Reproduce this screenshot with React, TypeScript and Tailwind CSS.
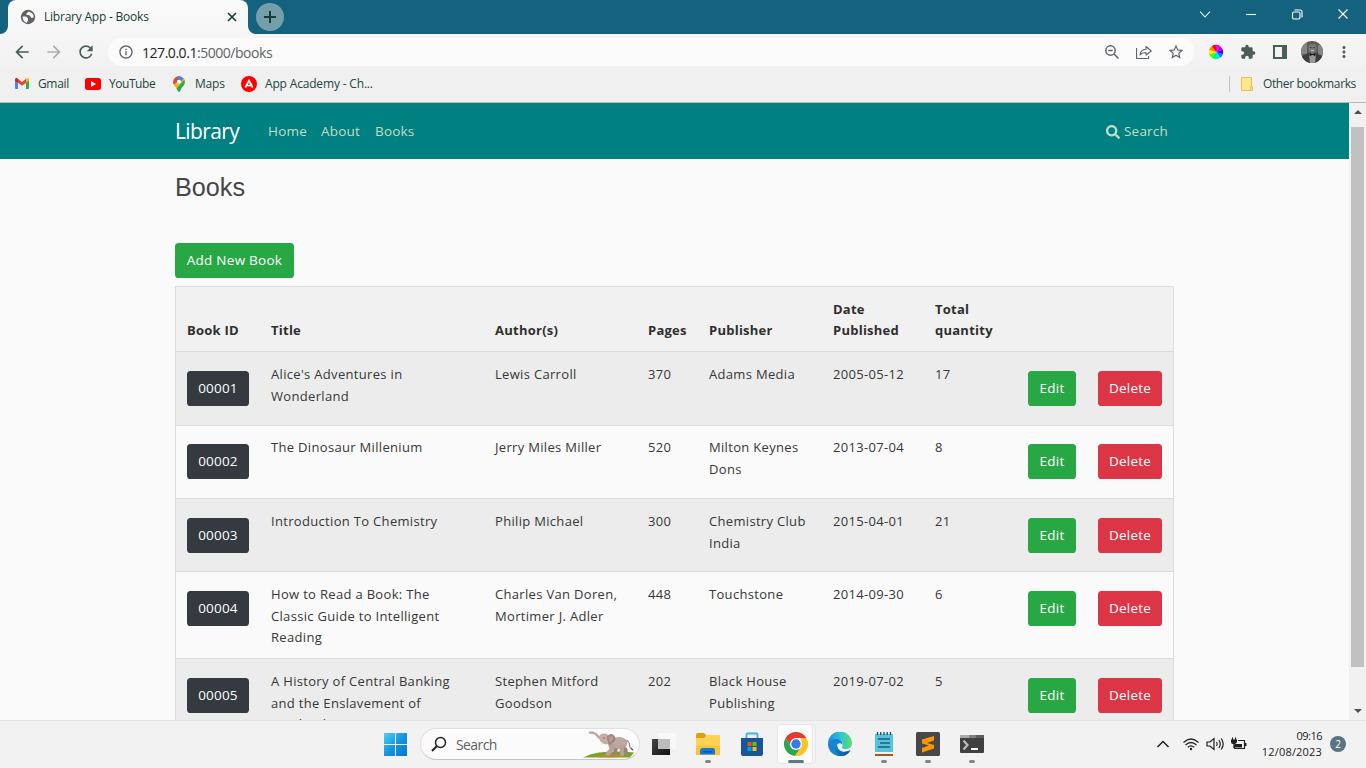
import React from "react";
import { FaSearch } from "react-icons/fa";
import { MdExtension, MdPublic, MdRefresh, MdArrowBack, MdArrowForward, MdStarBorder, MdInfoOutline, MdMoreVert } from "react-icons/md";

const books = [
  { id: "00001", title: ["Alice's Adventures in", "Wonderland"], author: ["Lewis Carroll"], pages: "370", publisher: ["Adams Media"], date: "2005-05-12", qty: "17", row: "h-[74px] bg-[#ececec] pt-[11px]" },
  { id: "00002", title: ["The Dinosaur Millenium"], author: ["Jerry Miles Miller"], pages: "520", publisher: ["Milton Keynes", "Dons"], date: "2013-07-04", qty: "8", row: "h-[73px] bg-[#fafafa] pt-[10px]" },
  { id: "00003", title: ["Introduction To Chemistry"], author: ["Philip Michael"], pages: "300", publisher: ["Chemistry Club", "India"], date: "2015-04-01", qty: "21", row: "h-[73px] bg-[#ececec] pt-[11px]" },
  { id: "00004", title: ["How to Read a Book: The", "Classic Guide to Intelligent", "Reading"], author: ["Charles Van Doren,", "Mortimer J. Adler"], pages: "448", publisher: ["Touchstone"], date: "2014-09-30", qty: "6", row: "h-[87px] bg-[#fafafa] pt-[11px]" },
  { id: "00005", title: ["A History of Central Banking", "and the Enslavement of", "Mankind"], author: ["Stephen Mitford", "Goodson"], pages: "202", publisher: ["Black House", "Publishing"], date: "2019-07-02", qty: "5", row: "h-[87px] bg-[#ececec] pt-[11px]" },
];

const columns = "grid grid-cols-[84px_224px_153px_61px_124px_102px_93px_70px_86px]";

function Lines({ lines }: { lines: string[] }) {
  return (
    <div className="pl-[11px] pt-px">
      {lines.map((l) => (
        <div key={l} className="whitespace-nowrap">{l}</div>
      ))}
    </div>
  );
}

function Btn({ children, tone }: { children: React.ReactNode; tone: string }) {
  return (
    <div className="pl-[11px] pt-2">
      <button className={"flex h-[35px] items-center justify-center rounded-[3.6px] pt-px text-[13.500px] tracking-[0.2px] text-white " + tone}>{children}</button>
    </div>
  );
}

function TabStrip() {
  return (
    <div className="flex h-[34px] bg-[#14627e]">
      <div className="flex w-2 items-end bg-[#f6f6f6]">
        <div className="h-full w-full rounded-br-lg bg-[#14627e]" />
      </div>
      <div className="flex w-60 items-center rounded-t-lg bg-gradient-to-b from-[#fafafa] to-[#f6f6f6] pl-3 pr-2.5">
        <svg viewBox="0 0 16 16" className="size-4"><circle cx="8" cy="8" r="7.200" fill="#5f6368" /><path d="M2.500 7.500h3.500l2 2v2l-1.500 2.500Q3 12.500 2.500 7.500zM8.500 2.500l-2 2v1.500h2.500l1.500 1.500 1 1.500 2.200-.5Q14 4 8.500 2.500z" fill="#f8f8f8" /></svg>
        <span className="ml-2 flex-1 text-[12px] tracking-[-0.22px] text-[#173d36]">Library App - Books</span>
        <svg viewBox="0 0 12 12" className="size-3" stroke="#173d36" strokeWidth="1.7"><path d="M2 2l8 8M10 2l-8 8" /></svg>
      </div>
      <div className="w-2 bg-[#f6f6f6]"><div className="h-full rounded-bl-lg bg-[#14627e]" /></div>
      <div className="mt-[3px] flex size-7 items-center justify-center rounded-full bg-[#759eab]">
        <svg viewBox="0 0 14 14" className="size-3.5" stroke="#173d36" strokeWidth="2"><path d="M7 1v12M1 7h12" /></svg>
      </div>
      <div className="flex-1" />
      <svg viewBox="0 0 160 28" className="h-7 w-40" fill="none" stroke="#fff" strokeWidth="1.1">
        <path d="M0 11.500l5 5.500 5-5.500" />
        <path d="M46 14.500h10" />
        <rect x="92.500" y="12" width="7.500" height="7" rx="1.500" />
        <path d="M94.500 10h5.500q2 0 2 2v5.500" />
        <path d="M138.500 9.500l9 9M147.500 9.500l-9 9" />
      </svg>
      <div className="w-[6px]" />
    </div>
  );
}

const wheel = ["#ff0000", "#ff00c8", "#b000ff", "#3300ff", "#0080ff", "#00e5ff", "#00ff55", "#55ff00", "#ffee00", "#ff8000"];

function Toolbar() {
  return (
    <div className="flex h-9 items-center bg-gradient-to-b from-[#f6f6f6] to-[#f1f1f1] pl-3 text-[#4a5e59]">
      <MdArrowBack className="size-5" />
      <MdArrowForward className="ml-3 size-5 text-[#a9b0ae]" />
      <MdRefresh className="ml-3 size-5" />
      <div className="ml-3 flex h-7 w-[1086px] items-center rounded-full bg-[#fbfbfb] pl-2.5 text-[#5f6368]">
        <MdInfoOutline className="size-4" />
        <span className="ml-2 text-[14px] tracking-[-0.46px]"><span className="text-[#202124]">127.0.0.1</span>:5000/books</span>
        <div className="flex-1" />
        <svg viewBox="0 0 16 16" className="size-4" fill="none" stroke="currentColor" strokeWidth="1.500"><circle cx="6.500" cy="6.500" r="4.700" /><path d="M10 10l4.500 4.500M4.300 6.500h4.400" /></svg>
        <svg viewBox="0 0 16 16" className="ml-4 size-4" fill="none" stroke="currentColor" strokeWidth="1.100"><path d="M.6 4v10.500h12v-2.500M4 11c.4-4 2.500-5.700 6-5.800V2.500L15.300 7 10 11V8.500c-3 0-4.500.5-6 2.500z" strokeLinejoin="round" /></svg>
        <MdStarBorder className="ml-[15px] size-[18px]" />
        <div className="w-[9px]" />
      </div>
      <svg viewBox="-8 -8 16 16" className="ml-3.5 size-4">
        {wheel.map((c, i) => (
          <path key={c} fill={c} transform={`rotate(${i * 36 - 18})`} d="M0 0L-2.300 -6.800A7.200 7.200 0 0 1 2.300 -6.800Z" />
        ))}
      </svg>
      <MdExtension className="ml-4 size-4" />
      <svg viewBox="0 0 14 14" className="ml-[17px] size-3.5"><path fill="currentColor" fillRule="evenodd" d="M0 0h14v14H0zM2 2h7v10H2z" /></svg>
      <svg viewBox="0 0 22 22" className="ml-[14px] size-[22px]">
        <defs><clipPath id="avatar"><circle cx="11" cy="11" r="11" /></clipPath></defs>
        <g clipPath="url(#avatar)">
          <path fill="#5c5c5c" d="M0 0h22v22H0z" />
          <path fill="#858585" d="M0 2h6v11H0zM17 4h5v10h-5z" />
          <path fill="#3d3d3d" d="M0 22v-6l7-4 4 2 5-2 6 4v6z" />
          <path fill="#999" d="M8 13l3 1 4-1-1 9H9z" />
          <ellipse cx="11.500" cy="7" rx="4" ry="5.500" fill="#777" />
          <path d="M7 5q4-7 9 0l-2-2.500H9z" fill="#303030" />
          <path d="M9 6.500h1.500M12.500 6.500h1.500" stroke="#3a3a3a" />
          <path d="M10 9.500h3" stroke="#c4c4c4" />
          <path d="M8.500 12l3 1.500 3-1.500v3l-3-1-3 1z" fill="#151515" />
        </g>
      </svg>
      <MdMoreVert className="ml-3 size-[18px]" />
    </div>
  );
}

function Bookmarks() {
  return (
    <div className="flex h-[33px] items-center border-b border-[#bababa] bg-[#f0f0f0] pb-[5px] pl-[15px] text-[12px] text-[#23463f]">
      <svg viewBox="0 0 14 11" className="h-[11px] w-3.5">
        <path fill="#4285f4" d="M0 1.500l3 2.300V11H1q-1 0-1-1z" />
        <path fill="#34a853" d="M14 1.500l-3 2.300V11h2q1 0 1-1z" />
        <path fill="#ea4335" d="M3 .7l4 3.200L11 .7v4L7 7.700 3 4.700z" />
        <path fill="#c5221f" d="M0 1.500Q.5-.8 3 .7v4L0 2.600z" />
        <path fill="#fbbc04" d="M14 1.500Q13.500-.8 11 .7v4l3-2.100z" />
      </svg>
      <span className="ml-[9px] w-[47px] tracking-[-0.35px]">Gmail</span>
      <svg viewBox="0 0 16 12" className="h-3 w-4"><rect width="16" height="12" rx="2.500" fill="#f00" /><path d="M6 3l5 3-5 3z" fill="#fff" /></svg>
      <span className="ml-2 w-[64px] tracking-[-0.45px]">YouTube</span>
      <svg viewBox="0 0 12 16" className="h-4 w-3">
        <defs><clipPath id="pin"><path d="M6 .3a5.700 5.700 0 0 1 5.700 5.700c0 3.500-3.200 4.800-4.400 8.500q-1.300 2.600-2.600 0C3.500 10.800.3 9.500.3 6A5.700 5.700 0 0 1 6 .3z" /></clipPath></defs>
        <g clipPath="url(#pin)">
          <path fill="#34a853" d="M0 0h12v16H0z" />
          <path fill="#fbbc04" d="M0 10L12-3v7L3 14z" />
          <path fill="#34a853" d="M12 3L2 14v2h10z" />
          <path fill="#4285f4" d="M4 0h9L4 10 1 6z" />
          <path fill="#ea4335" d="M0 0h4l2.500 3L2 9H0z" transform="translate(-1 0)" />
          <path fill="#fbbc04" d="M1 9l3-3 2 2-4 5z" />
        </g>
        <circle cx="6" cy="5.800" r="2" fill="#fff" />
      </svg>
      <span className="ml-2.5 w-[46px] tracking-[-0.2px]">Maps</span>
      <svg viewBox="0 0 16 16" className="size-4"><circle cx="8" cy="8" r="8" fill="#f00" /><path d="M4.300 11.500L8 4.500l3.700 7M5.500 9.500h5" fill="none" stroke="#fff" strokeWidth="1.700" /></svg>
      <span className="ml-2 flex-1 tracking-[-0.17px]">App Academy - Ch...</span>
      <div className="h-4 w-px bg-[#c3c3c3]" />
      <svg viewBox="0 0 12 14" className="ml-[11px] h-3.5 w-3"><path d="M.5.5h10v9h1v4H.5z" fill="#ffe693" stroke="#e8c34c" /><path d="M9.500 13v-3h2" fill="none" stroke="#e8c34c" /></svg>
      <span className="ml-2.5 mr-[10px] w-[93px] whitespace-nowrap tracking-[-0.37px]">Other bookmarks</span>
    </div>
  );
}

function Page() {
  return (
    <div className="h-[617px] flex-1 overflow-hidden bg-[#fafafa] text-[13px] leading-[21.6px] tracking-[0.32px] text-[#373737]">
      <nav className="flex h-14 items-center bg-[#008080] pl-[175px] pr-[182px] pt-px text-[13.500px] tracking-[0.2px] text-[#c3dcc8]">
        <span className="w-[93px] pt-px text-[21px] tracking-[-0.6px] text-white">Library</span>
        <span className="w-[53px]">Home</span>
        <span className="w-[54px]">About</span>
        <span className="flex-1">Books</span>
        <FaSearch className="mr-1 size-[14px]" />
        <span className="w-[43px]">Search</span>
      </nav>
      <div className="pl-[175px]">
        <h3 className="h-[84px] pt-[13px] font-['Liberation_Sans',sans-serif] text-[25.2px] leading-[30px] tracking-normal text-[#454545]">Books</h3>
        <button className="flex h-[35px] w-[119px] items-center justify-center rounded-[3.6px] bg-[#28a745] pt-px text-[13.500px] tracking-[0.26px] text-white">Add New Book</button>
        <div className="mt-2 w-[999px] border border-[#dcdee1]">
          <div className={columns + " h-16 items-end bg-[#f1f1f1] pb-[9px] font-bold tracking-[0.25px] text-[#2f2f2f] [&>div]:pl-[11px]"}>
            <div>Book ID</div><div>Title</div><div>Author(s)</div><div>Pages</div><div>Publisher</div>
            <div>Date<br />Published</div><div>Total<br />quantity</div>
          </div>
          {books.map((b) => (
            <div key={b.id} className={columns + " border-t border-[#dadbdd] " + b.row}>
              <Btn tone="w-[62px] bg-[#343a40]">{b.id}</Btn>
              <Lines lines={b.title} />
              <Lines lines={b.author} />
              <Lines lines={[b.pages]} />
              <Lines lines={b.publisher} />
              <Lines lines={[b.date]} />
              <Lines lines={[b.qty]} />
              <Btn tone="w-12 bg-[#28a745]">Edit</Btn>
              <Btn tone="w-16 bg-[#dc3545]">Delete</Btn>
            </div>
          ))}
        </div>
      </div>
    </div>
  );
}

function ScrollBar() {
  return (
    <div className="flex w-[17px] flex-col items-center bg-[#f1f1f1]">
      <svg viewBox="0 0 8 4" className="mt-[7px] h-1 w-2"><path d="M0 4l4-4 4 4z" fill="#505050" /></svg>
      <div className="mt-[13px] h-[540px] w-[13px] bg-[#c1c1c1]" />
      <svg viewBox="0 0 8 4" className="mt-[42px] h-1 w-2"><path d="M0 0l4 4 4-4z" fill="#505050" /></svg>
    </div>
  );
}

function Elephant() {
  return (
    <svg viewBox="0 0 52 28" className="h-7 w-[52px]">
      <path d="M0 27.500Q8 23.500 16 22.500q18-2 35 0L47 27.500z" fill="#7ba02a" />
      <path d="M10 26.500q16-3 32-1.500l-4 2q-14 1-28-.5z" fill="#b98a32" />
      <path d="M41 15l3.500 4 .5 6h-3.500l-1-5-4-4z" fill="#9a827c" />
      <path d="M30 16l1 4-2 5.500h3.500L35 19v-3z" fill="#9a827c" />
      <ellipse cx="36" cy="13" rx="8.500" ry="6" fill="#bda7a1" />
      <path d="M25 14l1.500 5-4 4 .5 2.500h3.500l5-6V14zM37 15l-.5 5 1 5.500h3.500V19l2.500-4z" fill="#b8a19b" />
      <path d="M43.500 10q3 2 3 5t3 4.500" fill="none" stroke="#a28b85" strokeWidth="1.200" />
      <path d="M48 17.500l3 3-2.500-.5z" fill="#57413d" />
      <path d="M7 2.700q5.500-.5 8 4l4.500 3.500" fill="none" stroke="#baa29b" strokeWidth="2.200" strokeLinecap="round" />
      <path d="M15.500 7Q17 3.500 21 3.500q5 0 6 5 0 5-3.500 6L19 13.500q-2-2-3.500-6.500z" fill="#c3aea7" />
      <path d="M24 6.500Q27 3 30 4.500q3.500 2 2 6.500l-5 4q-3-1-2-3.500-2-2-1-5z" fill="#a28780" />
      <path d="M26 7q3-2 4 1.500-1 3-3.500 4z" fill="#b99d94" />
      <circle cx="21" cy="8" r=".6" fill="#4b3a37" />
      <path d="M18 12l-1 3.500 3.500-2.500z" fill="#f1e9df" />
    </svg>
  );
}

function AppSlot({ children, running }: { children: React.ReactNode; running?: boolean }) {
  return (
    <div className="flex w-11 flex-col items-center pt-[11px]">
      {children}
      {running && <div className="mt-1 h-[3px] w-1.5 rounded-full bg-[#858585]" />}
    </div>
  );
}

function Taskbar() {
  return (
    <div className="flex h-12 border-t border-[#e4e4e4] bg-[#f2f2f2] pl-[384px] text-[#1c1c1c]">
      <svg viewBox="0 0 23 23" className="mt-3 h-[23px] w-[23px]">
        <defs><linearGradient id="win" x2="1" y2="1"><stop stopColor="#4fd0fa" /><stop offset=".5" stopColor="#1595df" /><stop offset="1" stopColor="#0877ce" /></linearGradient></defs>
        <path fill="url(#win)" d="M0 0h11v11H0zM12 0h11v11H12zM0 12h11v11H0zM12 12h11v11H12z" />
      </svg>
      <div className="ml-[13px] mt-[7px] flex h-[32px] w-[220px] items-center rounded-full border border-[#dfdfdf] border-b-[#c6c6c6] bg-[#fbfbfb] pl-2.5">
        <svg viewBox="0 0 16 16" className="size-4" fill="none" stroke="#222" strokeWidth="1.500"><circle cx="9.500" cy="6.500" r="5" /><path d="M5.700 10.200L1 15" strokeWidth="2" /></svg>
        <span className="ml-[9px] flex-1 text-[14px] tracking-[-0.6px] text-[#626262]">Search</span>
        <Elephant />
        <div className="w-1" />
      </div>
      <div className="w-[2px]" />
      <AppSlot>
        <svg viewBox="0 0 24 24" className="size-6">
          <defs><linearGradient id="tv" y2="1"><stop stopColor="#444" /><stop offset="1" stopColor="#141414" /></linearGradient></defs>
          <path d="M0 7h18v16H0z" fill="url(#tv)" /><path d="M6 1h18v16H6z" fill="#f8f8f8" /><path d="M6 7h12v10H6z" fill="#bdbdbd" />
        </svg>
      </AppSlot>
      <AppSlot running>
        <svg viewBox="0 0 24 24" className="size-6">
          <path d="M0 3q0-2 2-2h6l3 3v5H0z" fill="#dba20e" /><path d="M0 6h8l3-3h13v20H0z" fill="#ffd252" /><path d="M0 14h24v9H0z" fill="#fbc338" />
          <path d="M4 22.500V19q0-3 3-3h10q2 0 2 3v3.500z" fill="#107bd4" /><path d="M7 19h9v1.500H7z" fill="#0b5299" />
        </svg>
      </AppSlot>
      <AppSlot>
        <svg viewBox="0 0 24 24" className="size-6">
          <path d="M6.500 9V2.500q0-1 1-1h9q1 0 1 1V9" fill="none" stroke="#31b8ee" strokeWidth="1.800" />
          <path d="M1 6h22v16q0 2-2 2H3q-2 0-2-2z" fill="#195695" />
          <path fill="#f25022" d="M7.500 10h4v4h-4z" /><path fill="#7fba00" d="M12.500 10h4v4h-4z" /><path fill="#00a4ef" d="M7.500 15h4v4h-4z" /><path fill="#ffb900" d="M12.500 15h4v4h-4z" />
        </svg>
      </AppSlot>
      <div className="ml-[3px] mt-[3px] h-[40px] w-[39px] rounded border border-[#e6e6e6] bg-[#f7f7f7]">
        <div className="flex h-full w-[35px] flex-col items-center rounded border-r border-[#e6e6e6] bg-[#fbfbfb] pl-[2px] pt-[7px]">
          <svg viewBox="0 0 24 24" className="size-6 shrink-0">
            <path d="M1.600 6A12 12 0 0 1 22.400 6H12z" fill="#e33b2e" />
            <path d="M1.600 6A12 12 0 0 0 11 24L17.200 15 6.800 15z" fill="#2da44e" />
            <path d="M22.400 6A12 12 0 0 1 11 24L17.200 15V6z" fill="#fcc421" />
            <path d="M1.600 6L6.800 15 12 6z" fill="#2da44e" /><path d="M1.600 6h20.800H12L7 12z" fill="#e33b2e" />
            <circle cx="12" cy="12" r="6" fill="#fff" /><circle cx="12" cy="12" r="4.700" fill="#367bea" />
          </svg>
          <div className="mt-1 h-[3px] w-4 shrink-0 rounded-full bg-[#5c798b]" />
        </div>
      </div>
      <div className="w-[2px]" />
      <AppSlot>
        <svg viewBox="0 0 24 24" className="size-6">
          <defs>
            <linearGradient id="edge1" x2="1" y2="0"><stop stopColor="#198ed9" /><stop offset=".55" stopColor="#32c5d7" /><stop offset="1" stopColor="#5de060" /></linearGradient>
            <linearGradient id="edge2" x2="1" y2="1"><stop stopColor="#1a94e0" /><stop offset="1" stopColor="#0b4d94" /></linearGradient>
          </defs>
          <path d="M0 12A12 12 0 0 1 24 11c0 5-4 6.500-7.500 6-3-.5-3-1.500-1.800-3 .8-4-1.700-6-5.700-6Q3 8 0 12z" fill="url(#edge1)" />
          <path d="M0 12c1-4 5-5 8-5 4 0 7 3 6.500 6C13 10 9 11 8.500 14c-.5 6 8 8 14 4A12 12 0 0 1 0 12z" fill="#1684d2" />
          <path d="M9 10c-6 4-3 12 4 14 4 .5 8-2 9.500-6-6 3.500-14 2-13.500-8z" fill="url(#edge2)" />
        </svg>
      </AppSlot>
      <AppSlot running>
        <svg viewBox="0 0 24 24" className="size-6">
          <path d="M3 2h18v18H3z" fill="#58c1dd" /><path d="M3 20h18v2H3z" fill="#f3f3f3" /><path d="M3 22h18v2H3z" fill="#a7551b" />
          <path d="M5.500 0v3M8.700 0v3M12 0v3M15.200 0v3M18.500 0v3" stroke="#174f68" strokeWidth="1.300" /><path d="M6 7h12M8 11h10M6 15h12" stroke="#14647f" strokeWidth="1.500" />
        </svg>
      </AppSlot>
      <AppSlot running>
        <svg viewBox="0 0 24 24" className="size-6"><rect width="24" height="24" rx="1.500" fill="#474747" /><path d="M6 7.500L18 4v4.500L11 11l7 2v3.500L6 20.500V16l7-2.500-7-2z" fill="#ff9800" /></svg>
      </AppSlot>
      <AppSlot running>
        <svg viewBox="0 0 24 24" className="size-6"><rect y="3" width="24" height="18" rx="1" fill="#404040" /><path d="M0 3h9v3H0z" fill="#aaa" /><path d="M9 3h7v3H9z" fill="#808080" /><path d="M16 3h8v3h-8z" fill="#5e5e5e" /><path d="M3.500 8.500L7.500 13l-4 4.500" fill="none" stroke="#bbb" strokeWidth="2.200" /><path d="M11 17h7" stroke="#fff" strokeWidth="2" /></svg>
      </AppSlot>
      <div className="flex-1" />
      <svg viewBox="0 0 92 20" className="mt-[13px] h-5 w-[92px]" fill="none" stroke="#202020" strokeWidth="1.200">
        <path d="M1.500 13L7 7.500l5.500 5.500" strokeWidth="1.500" />
        <path d="M27.500 8.500q7.500-7 15 0M29.500 11q5.500-5 11 0M31.800 13.300q3.200-2.800 6.400 0" /><circle cx="35" cy="15" r="1.200" fill="#202020" stroke="none" />
        <path d="M51 8h3l4-3.500v11L54 12h-3zM60.500 8q1.500 2 0 4M62.800 6q3 4 0 8M65.200 4.500q4 5.500 0 11" />
        <path d="M82 6.500h6.500v8H78.500v-4" /><path d="M79 10h7v3.500h-7zM89 9h1.500v3H89zM75 5.500h6V8q-1 2-2 2h-2q-2 0-2-2z" fill="#202020" stroke="none" /><path d="M76.500 3.500v3M79.500 3.500v3M78 9v5" />
      </svg>
      <div className="ml-[8px] mt-[7px] w-[66px] text-right text-[11px] leading-4"><div className="tracking-[-0.5px]">09:16</div><div className="whitespace-nowrap tracking-[0.18px]">12/08/2023</div></div>
      <div className="ml-2 mr-5 mt-[15px] flex size-4 items-center justify-center rounded-full bg-[#5a7582] text-[10px] text-white">2</div>
    </div>
  );
}

export default function App() {
  return (
    <div className="flex h-[768px] w-[1366px] flex-col overflow-hidden bg-[#fafafa] font-['Open_Sans','Noto_Sans',sans-serif]">
      <TabStrip />
      <Toolbar />
      <Bookmarks />
      <div className="flex h-[617px] shrink-0">
        <Page />
        <ScrollBar />
      </div>
      <Taskbar />
    </div>
  );
}
